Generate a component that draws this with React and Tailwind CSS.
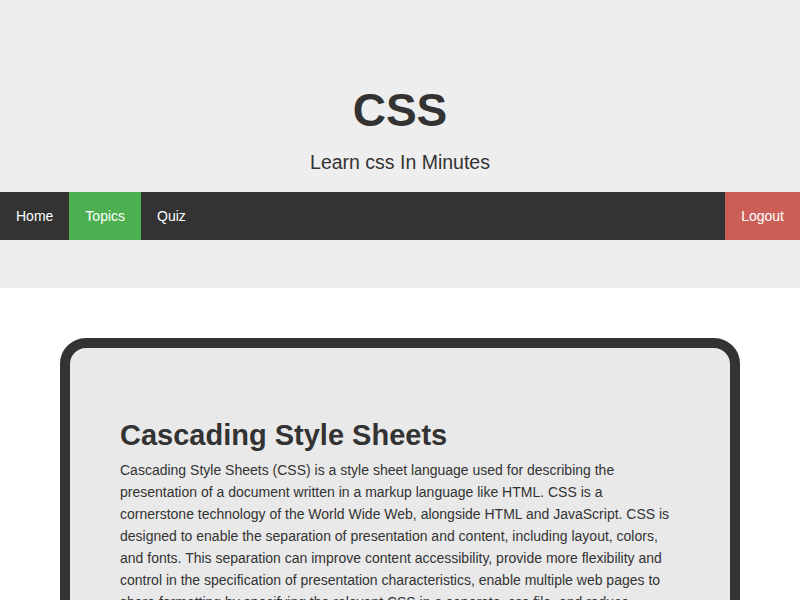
import React from 'react';

const navLinks = [
  { label: 'Home' },
  { label: 'Topics', active: true },
  { label: 'Quiz' },
];

export default function App() {
  return (
    <div className="min-h-screen bg-white text-[#333]" style={{ fontFamily: '"Liberation Sans", Arial, sans-serif' }}>
      {/* Header */}
      <header className="bg-[#eeeeee] pb-[48px]">
        <div className="flex flex-col items-center pt-[84px] pb-[18px]">
          <h1 className="text-[46px] font-bold leading-[52px] text-[#333]">CSS</h1>
          <p className="mt-[14px] text-[19.5px] leading-[24px] font-light text-[#333]">Learn css In Minutes</p>
        </div>
        <nav className="flex h-[48px] bg-[#333333] text-white text-[14px]">
          {navLinks.map((link) => (
            <a
              key={link.label}
              href="#"
              className={
                link.active
                  ? 'flex items-center px-4 bg-[#4caf50]'
                  : 'flex items-center px-4'
              }
            >
              {link.label}
            </a>
          ))}
          <a href="#" className="ml-auto flex items-center px-4 bg-[#cb5f58]">
            Logout
          </a>
        </nav>
      </header>

      {/* Content */}
      <main className="pt-[50px] pb-[50px]">
        <div className="mx-auto w-[680px] rounded-[26px] border-[10px] border-[#333333] bg-[#e9e9e9] px-[50px] pt-[69px] pb-[50px]">
          <h2 className="text-[29px] font-bold leading-[36px] text-[#333]">Cascading Style Sheets</h2>
          <p className="mt-[6px] text-[14px] leading-[22px] text-[#333]">
            Cascading Style Sheets (CSS) is a style sheet language used for describing the presentation of a document
            written in a markup language like HTML. CSS is a cornerstone technology of the World Wide Web, alongside
            HTML and JavaScript. CSS is designed to enable the separation of presentation and content, including
            layout, colors, and fonts. This separation can improve content accessibility, provide more flexibility and
            control in the specification of presentation characteristics, enable multiple web pages to share
            formatting by specifying the relevant CSS in a separate .css file, and reduce complexity and repetition in
            the structural content.
          </p>
        </div>
      </main>
    </div>
  );
}
